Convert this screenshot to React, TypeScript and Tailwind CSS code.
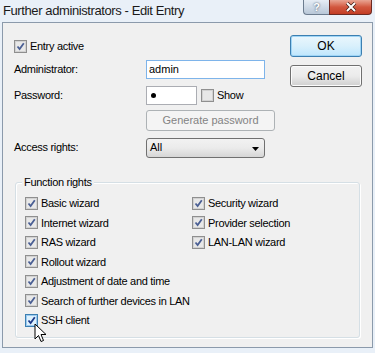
import React from "react";

const sans = { fontFamily: '"Liberation Sans", Arial, sans-serif' };

function Check({ checked = true, hot = false }: { checked?: boolean; hot?: boolean }) {
  return (
    <span
      className={`flex h-[13px] w-[13px] shrink-0 items-center justify-center border ${
        hot ? "border-[#3c7fb1]" : "border-[#8f8f8f]"
      } bg-white`}
    >
      <span
        className={`flex h-[11px] w-[11px] items-center justify-center border ${
          hot ? "border-[#9ccaf0] bg-[#def1fd]" : "border-[#d2d2d2] bg-[#e8e8e8]"
        }`}
      >
        {checked && (
          <svg width="9" height="9" viewBox="0 0 9 9">
            <path
              d="M1.5 4.5 L3.6 7 L7.8 1.2"
              fill="none"
              stroke={hot ? "#1c3a8a" : "#4a5f94"}
              strokeWidth="1.8"
            />
          </svg>
        )}
      </span>
    </span>
  );
}

function Row({ label, hot = false }: { label: string; hot?: boolean }) {
  return (
    <div className="flex h-[19.5px] items-center gap-[3px]">
      <Check hot={hot} />
      <span className="whitespace-nowrap text-[11px] tracking-[-0.3px] text-black">{label}</span>
    </div>
  );
}

function Button({ children, focus = false }: { children: React.ReactNode; focus?: boolean }) {
  return (
    <div
      className={`flex h-[22px] w-[72px] items-center justify-center rounded-[3px] border text-[12px] text-black ${
        focus
          ? "border-[#3c7fb1] bg-gradient-to-b from-[#eaf6fd] via-[#d9f0fc] to-[#bee6fd] shadow-[inset_0_0_0_1px_#9fd5f6]"
          : "border-[#707070] bg-gradient-to-b from-[#f2f2f2] via-[#ebebeb] to-[#cfcfcf] shadow-[inset_0_0_0_1px_#fcfcfc]"
      }`}
    >
      {children}
    </div>
  );
}

export default function App() {
  const left = ["Basic wizard", "Internet wizard", "RAS wizard", "Rollout wizard", "Adjustment of date and time", "Search of further devices in LAN"];
  const right = ["Security wizard", "Provider selection", "LAN-LAN wizard"];
  const label = "w-[132px] shrink-0 text-[11px] tracking-[-0.3px]";
  return (
    <div className="relative flex h-[353px] w-[375px] flex-col overflow-hidden bg-[#e9f0f8]" style={sans}>
      {/* title bar */}
      <div className="flex h-[22px] shrink-0 items-start justify-between pl-[3px]">
        <span className="whitespace-nowrap pt-[2px] text-[13px] leading-[18px] tracking-[-0.4px] text-[#1a1a1a]">
          Further administrators - Edit Entry
        </span>
        <div className="mr-[3px] flex">
          <div className="flex h-[15px] w-[26px] items-center justify-center rounded-bl-[4px] border border-r-0 border-t-0 border-[#6c7c8f] bg-gradient-to-b from-[#e6edf5] to-[#b8c7d8] text-[11px] font-bold leading-none text-white [text-shadow:0_0_2px_#2c3e55]">
            ?
          </div>
          <div className="flex h-[15px] w-[43px] items-center justify-center rounded-br-[4px] border border-t-0 border-[#6c2a22] bg-gradient-to-b from-[#e8a493] via-[#d2573f] to-[#c33d24]">
            <svg width="12" height="10" viewBox="0 0 12 10">
              <path d="M2 1 L10 9 M10 1 L2 9" stroke="#3d1a14" strokeWidth="3.4" />
              <path d="M2 1 L10 9 M10 1 L2 9" stroke="#ffffff" strokeWidth="2" />
            </svg>
          </div>
        </div>
      </div>

      {/* client area */}
      <div className="relative mx-[2px] mb-[5px] flex-1 border border-[#8b9aab] bg-[#f0f0f0]">
        <div className="flex">
          <div className="flex-1 pl-[11px]">
            <div className="mt-[15px] flex items-center gap-[3px]">
              <Check />
              <span className="text-[11px] tracking-[-0.3px]">Entry active</span>
            </div>
            <div className="mt-[5px] flex items-center">
              <span className={label}>Administrator:</span>
              <div className="flex h-[19px] w-[119px] items-center border border-[#7eb4ea] bg-white pl-[2px] text-[11px]">admin</div>
            </div>
            <div className="mt-[7px] flex items-center">
              <span className={label}>Password:</span>
              <div className="flex h-[19px] w-[51px] items-center border border-[#abadb3] bg-white pl-[4px]">
                <span className="h-[5px] w-[5px] rounded-full bg-black" />
              </div>
              <span className="ml-[4px] flex items-center gap-[3px]">
                <Check checked={false} />
                <span className="text-[11px] tracking-[-0.3px]">Show</span>
              </span>
            </div>
            <div className="mt-[5px] flex items-center">
              <span className="w-[132px] shrink-0" />
              <div className="flex h-[21px] w-[129px] items-center justify-center rounded-[3px] border border-[#adb2b5] bg-[#f4f4f4] text-[11px] text-[#838383]">
                Generate password
              </div>
            </div>
            <div className="mt-[7px] flex items-center">
              <span className={label}>Access rights:</span>
              <div className="relative flex h-[20px] w-[119px] items-center rounded-[3px] border border-[#707070] bg-gradient-to-b from-[#f2f2f2] via-[#ebebeb] to-[#d6d6d6] pl-[3px] text-[11px]">
                All
                <svg className="absolute right-[5px] top-[8px]" width="7" height="4" viewBox="0 0 7 4">
                  <path d="M0 0 H7 L3.5 4 Z" fill="#000" />
                </svg>
              </div>
            </div>
          </div>
          <div className="mr-[10px] mt-[12px] flex flex-col gap-[8px]">
            <Button focus>OK</Button>
            <Button>Cancel</Button>
          </div>
        </div>

        {/* group box */}
        <div className="relative mx-[12px] mt-[24px] h-[156px] rounded-[3px] border border-[#d5dfe5] shadow-[1px_1px_0_#ffffff_inset,1px_1px_0_#ffffff]">
          <span className="absolute -top-[8px] left-[6px] bg-[#f0f0f0] px-[2px] text-[11px] leading-[14px] tracking-[-0.3px]">Function rights</span>
          <div className="flex pl-[9px] pt-[11px]">
            <div className="w-[167px]">
              {left.map((l) => (
                <Row key={l} label={l} />
              ))}
              <Row label="SSH client" hot />
            </div>
            <div>
              {right.map((l) => (
                <Row key={l} label={l} />
              ))}
            </div>
          </div>
        </div>

        {/* mouse cursor */}
        <svg className="absolute left-[31px] top-[300px]" width="14" height="22" viewBox="0 0 14 22">
          <path
            d="M1 1 L1 16 L4.5 12.5 L7 18.5 L9.5 17.5 L7 11.5 L12 11.5 Z"
            fill="#ffffff"
            stroke="#000"
            strokeWidth="1"
            strokeLinejoin="round"
          />
        </svg>
      </div>
    </div>
  );
}
